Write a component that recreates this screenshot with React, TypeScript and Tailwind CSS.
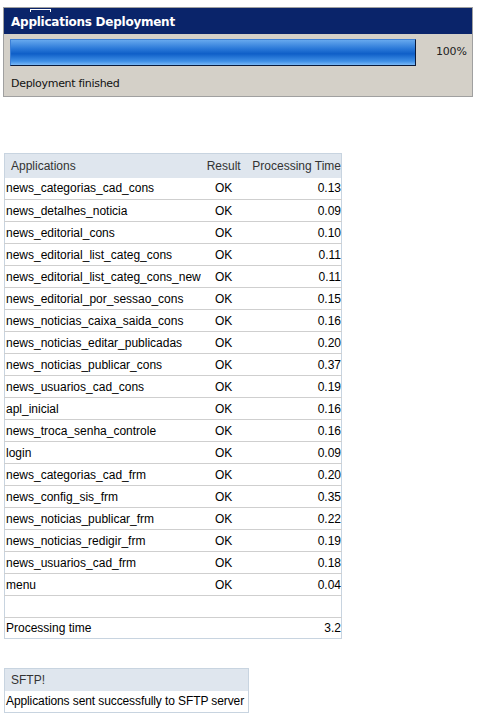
const rows: [string, string][] = [
  ["news_categorias_cad_cons", "0.13"],
  ["news_detalhes_noticia", "0.09"],
  ["news_editorial_cons", "0.10"],
  ["news_editorial_list_categ_cons", "0.11"],
  ["news_editorial_list_categ_cons_new", "0.11"],
  ["news_editorial_por_sessao_cons", "0.15"],
  ["news_noticias_caixa_saida_cons", "0.16"],
  ["news_noticias_editar_publicadas", "0.20"],
  ["news_noticias_publicar_cons", "0.37"],
  ["news_usuarios_cad_cons", "0.19"],
  ["apl_inicial", "0.16"],
  ["news_troca_senha_controle", "0.16"],
  ["login", "0.09"],
  ["news_categorias_cad_frm", "0.20"],
  ["news_config_sis_frm", "0.35"],
  ["news_noticias_publicar_frm", "0.22"],
  ["news_noticias_redigir_frm", "0.19"],
  ["news_usuarios_cad_frm", "0.18"],
  ["menu", "0.04"],
];

export default function App() {
  return (
    <div className="w-[478px] h-[716px] bg-white overflow-hidden">
      {/* Deployment window */}
      <div className="relative ml-[3px] mt-[7px] w-[470px] h-[90px] border border-[#a0a0a0] bg-[#d4d0c8] font-['DejaVu_Sans',sans-serif]">
        <div className="absolute left-[26px] top-[1px] w-[21px] h-[3px] border-t border-x border-white" />
        <div className="h-[26px] bg-[#0a246a] pl-[7px] pt-[5px] text-[12px] font-bold text-white tracking-[-0.25px]">
          Applications Deployment
        </div>
        <div className="flex items-center mt-[5px] pl-[6px]">
          <div className="w-[406px] h-[27px] border border-[#0a1a3a] border-t-[#3c7fd6] border-l-[#3c7fd6] bg-[linear-gradient(to_bottom,#66a8ee,#2a78d8_35%,#0f5fc8_55%,#3f8fe6_85%,#7ab9f7)]" />
          <span className="ml-[20px] text-[11px] text-[#222] tracking-[-0.2px]">100%</span>
        </div>
        <div className="pl-[7px] mt-[10px] text-[11px] text-[#111] tracking-[-0.3px]">Deployment finished</div>
      </div>

      {/* Applications table */}
      <table className="ml-[4px] mt-[56px] w-[338px] border-collapse border border-[#c8d4e0] font-['Liberation_Sans',Arial,sans-serif] text-[12px] text-black">
        <thead>
          <tr className="h-[24px] bg-[#dfe6ee] text-[#333]">
            <th className="text-left font-normal pl-[6px]">Applications</th>
            <th className="text-center font-normal w-[46px]">Result</th>
            <th className="text-right font-normal w-[96px] pr-0">Processing Time</th>
          </tr>
        </thead>
        <tbody>
          {rows.map(([name, time]) => (
            <tr key={name} className="h-[22px] border-b border-[#cfcfcf]">
              <td className="pl-[1px]">{name}</td>
              <td className="text-center">OK</td>
              <td className="text-right pr-0">{time}</td>
            </tr>
          ))}
          <tr className="h-[22px] border-b border-[#cfcfcf]">
            <td colSpan={3} />
          </tr>
          <tr className="h-[21px]">
            <td className="pl-[1px]">Processing time</td>
            <td />
            <td className="text-right pr-0">3.2</td>
          </tr>
        </tbody>
      </table>

      {/* SFTP */}
      <div className="ml-[4px] mt-[29px] w-[245px] border border-[#c8d4e0] font-['Liberation_Sans',Arial,sans-serif] text-[12px]">
        <div className="h-[22px] bg-[#dfe6ee] pl-[6px] leading-[22px] text-[#333]">SFTP!</div>
        <div className="h-[21px] leading-[21px] pl-[1px] text-black whitespace-nowrap tracking-[-0.1px]">
          Applications sent successfully to SFTP server
        </div>
      </div>
    </div>
  );
}
